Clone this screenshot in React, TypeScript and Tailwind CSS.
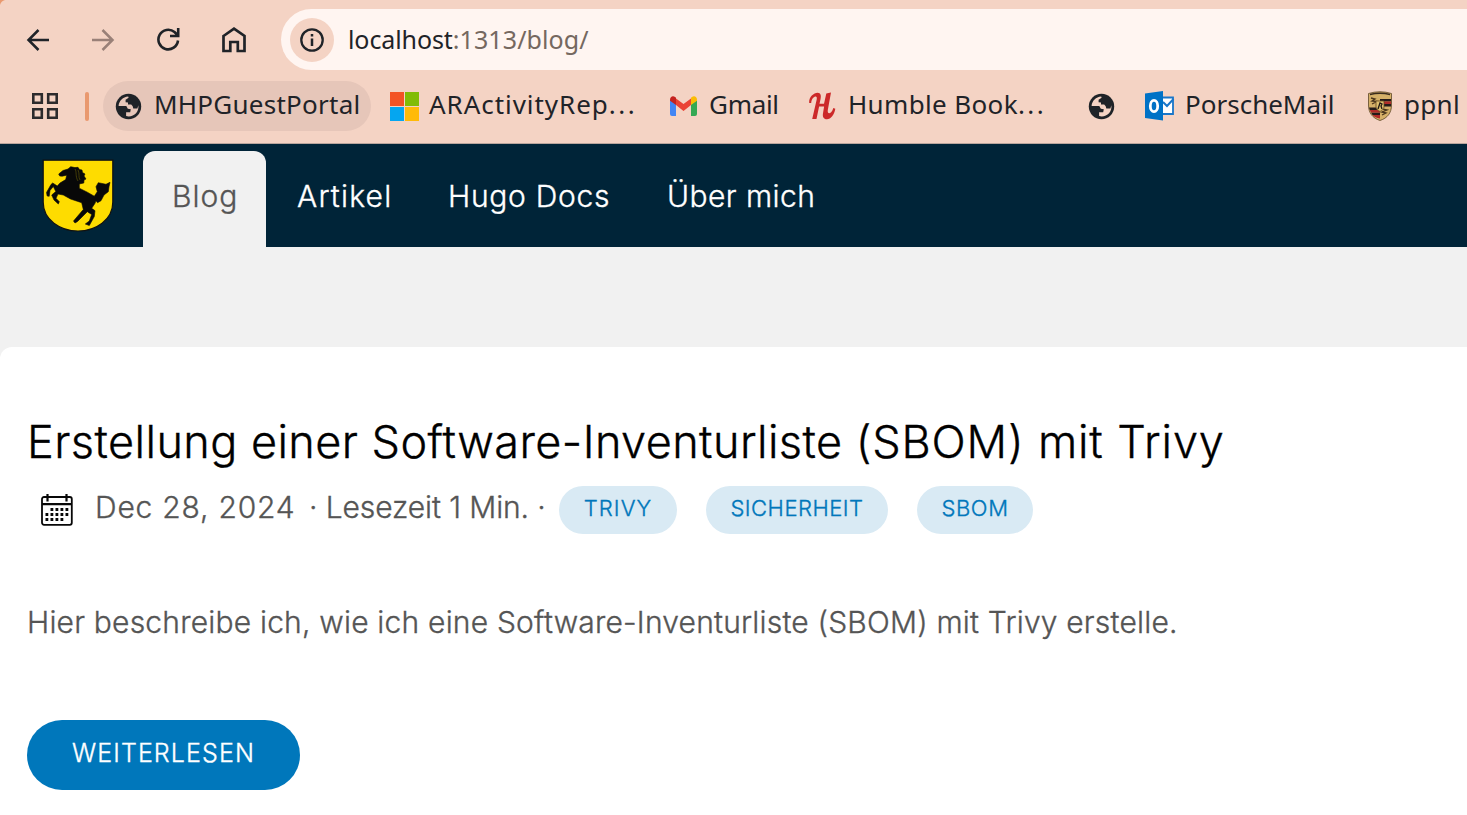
import React from 'react';

const ui = "font-['Noto_Sans','Open_Sans',sans-serif] whitespace-nowrap text-[#1f2328]";
const bookmark = "shrink-0 pb-[3px] text-[26px] leading-[47px]";
const body = "font-['Inter','Liberation_Sans',sans-serif] whitespace-nowrap";
const tag = "rounded-full bg-[#d9eaf4] pb-1 text-center text-[22px] leading-[44px] text-[#0077bb]";

function Globe({ className = '' }: { className?: string }) {
  return (
    <svg className={`shrink-0 ${className}`} width="27" height="27" viewBox="0 0 27 27">
      <circle cx="13.5" cy="13.5" r="12.7" fill="#1f2328" />
      <path className="fill-[var(--hole)]" d="M3.6 12.9C3.9 8 8 3.8 13.2 3.5L13.6 4.7 10.6 6.8V9.3L13 9.4V11.6H16.2L17.7 13.2 18.3 15.6H22.4L23.3 12.2C24.4 18.2 19.4 23.6 13.6 23.5L11.1 23.1V19.3H15.2L15.8 16.2 12.8 15.7 11.3 13Z" />
    </svg>
  );
}

function Bookmarks() {
  return (
    <div className="flex h-[50px] items-center">
      <svg className="ml-8 shrink-0" width="27" height="27" fill="none" stroke="#2c2b2d" strokeWidth="2.6">
        <path d="M1.3 1.3h8.5v8.5H1.3zM16.2 1.3h8.5v8.5h-8.5zM1.3 16.2h8.5v8.5H1.3zM16.2 16.2h8.5v8.5h-8.5z" />
      </svg>
      <div className="ml-[26px] h-[29px] w-1 shrink-0 rounded-sm bg-[#e9996f]" />
      <div className="ml-[14px] flex h-[50px] w-[268px] shrink-0 items-center rounded-full bg-[#e6c6b9] [--hole:#e6c6b9]">
        <Globe className="ml-3" />
        <span className={`${ui} ${bookmark} ml-[12px] tracking-[0.25px]`}>MHPGuestPortal</span>
      </div>
      <svg className="ml-[19px] shrink-0" width="29" height="29">
        <path d="M0 0h14v14H0z" fill="#f35325" />
        <path d="M15 0h14v14H15z" fill="#81bc06" />
        <path d="M0 15h14v14H0z" fill="#05a6f0" />
        <path d="M15 15h14v14H15z" fill="#ffba08" />
      </svg>
      <span className={`${ui} ${bookmark} ml-[10px] w-[230px] tracking-[0.95px]`}>ARActivityRep<span className="tracking-[2.5px]">...</span></span>
      <svg className="ml-[11px] shrink-0" width="27" height="20" viewBox="0 0 27 20">
        <path d="M0 4l6 4v12H2a2 2 0 0 1-2-2z" fill="#4285f4" />
        <path d="M21 8l6-4v14a2 2 0 0 1-2 2h-4z" fill="#34a853" />
        <path d="M6 2.5l7.5 5.4L21 2.5V9l-7.5 6L6 9z" fill="#ea4335" />
        <path d="M0 3.5C0 .6 3-.8 5.1 1L6 1.8V9L0 4.8z" fill="#c5221f" />
        <path d="M27 3.5C27 .6 24-.8 21.9 1l-.9.8V9l6-4.2z" fill="#fbbc04" />
      </svg>
      <span className={`${ui} ${bookmark} ml-[12px] w-[88px] tracking-[-0.3px]`}>Gmail</span>
      <svg className="ml-[11px] mr-px shrink-0" width="28" height="28" viewBox="0 0 28 28" fill="#cc2929">
        <path d="M1.2 11C.6 5 6 .8 9.5.8c3.5 0 3.8 3 3 6.5l-1 4.500h4.500L18.300 1.500 23 .5 19.800 18c-.5 3.500 1.500 4 3.300 2.200 1.200-1.200 1.800-2.700 2.200-4.200l2 .7c-1 6-4.500 10.500-8.300 10.500-3.500 0-4.600-2.500-4-6l1.100-6.700h-5L8.500 27H4.200L8.700 7.500C9.300 4.500 8 4 6.300 5 4.200 6.200 3.300 8.500 3.200 11z" />
      </svg>
      <span className={`${ui} ${bookmark} ml-[11px] w-[210px] tracking-[0.35px]`}>Humble Book<span className="tracking-[2.5px]">...</span></span>
      <Globe className="ml-[30px] [--hole:#f4d3c4]" />
      <svg className="ml-[30px] shrink-0" width="30" height="30" viewBox="0 0 30 30">
        <path d="M17 6.500h11V23H17z" fill="#fff" stroke="#1976c9" strokeWidth="1.800" />
        <path d="M18 11l4 4 6.500-7" fill="none" stroke="#1976c9" strokeWidth="2" />
        <path d="M0 2.500L18 0v29.500L0 27z" fill="#0072c6" />
        <ellipse cx="9" cy="15" rx="3.700" ry="5.700" fill="none" stroke="#fff" strokeWidth="2.800" />
      </svg>
      <span className={`${ui} ${bookmark} ml-[10px] w-[152px]`}>PorscheMail</span>
      <svg className="ml-[31px] shrink-0" width="24" height="30" viewBox="0 0 24 30">
        <path d="M.5 2.500Q12-1 23.500 2.500V14c0 8-4 13-11.500 15.500C4.500 27 .5 22 .5 14z" fill="#d5b068" stroke="#5d4827" strokeWidth=".8" />
        <path d="M2 2.800q10-2.500 20 0v1.400q-10-2.500-20 0z" fill="#3a2b1c" />
        <path d="M12 8h11v2.500H12zM12 13h11v2.500H12zM1 16.500h10V19H1.800zM3 21.500h9V24H4.500z" fill="#241b1a" />
        <path d="M12 10.500h11V13H12zM1.800 19H12v2.500H3zM4.500 24H12v3.500C8.500 27 6 26 4.500 24z" fill="#b12b28" />
        <path d="M3 7l4 1-3 2 5 .5-5 2.500M14 18l5 1-5 2 4 1-4 2" fill="none" stroke="#4a351c" strokeWidth="1.300" />
        <path d="M8 10h8v6c0 2-2 3.500-4 4.500-2-1-4-2.500-4-4.500z" fill="#dfbf70" stroke="#61471f" strokeWidth=".8" />
        <path d="M10 18l2-6 2 1-1 2 1 3" fill="none" stroke="#211811" strokeWidth="1.300" />
      </svg>
      <span className={`${ui} ${bookmark} ml-[12px] tracking-[0.3px]`}>ppnl</span>
    </div>
  );
}

function BrowserBar() {
  return (
    <header className="relative h-36 shrink-0 border-b border-[#b9a59d] bg-[#f4d3c4] pt-[9px]">
      <svg className="absolute left-0 top-0" width="5" height="5"><path d="M0 0h5Q1 1 0 5z" fill="#e9996f" /></svg>
      <div className="flex h-[61px] items-center">
        <svg className="ml-[26px] shrink-0" width="24" height="24" fill="none" stroke="#1f2328" strokeWidth="2.500">
          <path d="M23 12H3M12.500 2L2.500 12l10 10" />
        </svg>
        <svg className="ml-[41px] shrink-0" width="24" height="24" fill="none" stroke="#998078" strokeWidth="2.500">
          <path d="M1 12h20M11.500 2l10 10-10 10" />
        </svg>
        <svg className="ml-[41px] shrink-0" width="25" height="25" fill="none" stroke="#1f2328" strokeWidth="2.600">
          <path d="M22 13.500A9.800 9.800 0 1 1 18.500 5l3 3M22.200 1v8H14" />
        </svg>
        <svg className="ml-[41px] shrink-0" width="24" height="26" fill="none" stroke="#1f2328" strokeWidth="2.700">
          <path d="M1.500 9L12 1.700 22.500 9v15H15.800v-9H8.300v9H1.500z" />
        </svg>
        <div className="ml-[35px] flex h-[61px] flex-1 items-center rounded-l-full bg-[#fff5f1]">
          <div className="ml-[9px] flex h-11 w-11 items-center justify-center rounded-full bg-[#f4d3c4]">
            <svg width="24" height="24" fill="none" stroke="#1f2328" strokeWidth="2.300">
              <circle cx="12" cy="12" r="10.700" />
              <path d="M12 10.500v7.500M12 6v2.600" strokeWidth="2.500" />
            </svg>
          </div>
          <span className={`${ui} ml-[14px] text-[25px] leading-[61px] tracking-[-0.1px]`}>
            localhost<span className="tracking-[0.1px] text-[#75685f]">:1313/blog/</span>
          </span>
        </div>
      </div>
      <div className="pt-[11px]"><Bookmarks /></div>
    </header>
  );
}

function Crest() {
  return (
    <svg className="ml-[42px] mt-[15px] shrink-0" width="72" height="73" viewBox="0 0 72 73">
      <path d="M1.200 1.200h69.600V43c0 18-17 29-34.800 29S1.200 61 1.200 43z" fill="#fedc00" stroke="#111" strokeWidth="1.200" />
      <path d="M28.700 7.700L26 10l-5 1.500-4.300 3.500 1 2 2.500.2 4.500-1-1 4.400-5.700 3.400-2.700 3-4.600-3-1.700 1.500-4.500 8 .7 3.500 2 .3L8 31.500l3.300-4 2.500 5-4.100 3.500 2.300 5 4.300 4 1-2.300-3.300-3.400 2-4.300L21.300 36l7.200 4 11.200 3.700 1.600 6.800-9.800 11.500 1.500 2 2.500-1.500 9.800-9.800 4.400 2.800-2.400 6.500-4 3 4 1.500 5-9 .7-5.800-3.300-2.400 3.300-5 1-2.600 1.500 2 3.500-2L62 36l4.300-3.300.7-5 1-4.400-4 2-7.700-1.600-2.300 4 1.300 5-3 4.500-7-4-8-4V25l4.500-1 .2-3 2-1-2-3 1-2-2.500-1.500-.5-2.500-2.500-.5-1.500-2.200-3 .3z" fill="#080808" stroke="#080808" strokeWidth=".6" />
      <path d="M33 10c2 3 0 7 3 12M36 11c2 4 0 7 2 10" stroke="#5c5207" strokeWidth=".7" fill="none" />
    </svg>
  );
}

function Calendar() {
  return (
    <svg className="ml-[13px] mr-px shrink-0" width="33" height="34" viewBox="0 0 33 34">
      <rect x="2" y="4" width="29.800" height="27.800" rx="2" fill="none" stroke="#080808" strokeWidth="1.800" />
      <path d="M2 11.200h29.500M7.500 1v7.500M26.500 1v7.500" stroke="#080808" strokeWidth="2.200" />
      <path d="M10.500 16.500h19M5.500 21.500h24M5.500 26.500h18.500" fill="none" stroke="#080808" strokeWidth="2.800" strokeDasharray="2.800 2.200" />
    </svg>
  );
}

export default function App() {
  return (
    <div className="flex h-[815px] w-[1467px] flex-col overflow-hidden bg-[#f1f1f1]">
      <BrowserBar />
      <nav className={`${body} flex h-[103px] shrink-0 bg-[#002438] text-[30px] font-light leading-[90px] text-white [-webkit-text-stroke:0.35px]`}>
        <Crest />
        <a className="ml-[29px] mt-[7px] h-24 w-[123px] rounded-t-xl bg-[#f1f1f1] pl-[29px] tracking-[1px] text-[#555]">Blog</a>
        <a className="ml-[31px] mt-[7px] w-[122px] tracking-[1.2px]">Artikel</a>
        <a className="ml-[29px] mt-[7px] w-[190px] tracking-[0.7px]">Hugo Docs</a>
        <a className="ml-[29px] mt-[7px] tracking-[0.45px]">Über mich</a>
      </nav>
      <main className={`${body} mt-[100px] flex flex-1 flex-col items-start rounded-tl-xl bg-white pl-[27px] font-light text-[#555] [-webkit-text-stroke:0.35px]`}>
        <h1 className="mt-[65px] h-[60px] text-[45px] font-light leading-[60px] tracking-[0.44px] text-black">
          Erstellung einer Software-Inventurliste <span className="tracking-[0.85px]">(SBOM) mit Trivy</span>
        </h1>
        <div className="mt-[14px] flex h-12 items-center text-[30px]">
          <Calendar />
          <span className="ml-[21px] w-[214px] pb-1.5 tracking-[0.8px]">Dec 28, 2024</span>
          <span className="w-[250px] pb-1.5 tracking-[-0.1px]">· Lesezeit 1 Min. ·</span>
          <span className={`${tag} w-[118px] tracking-[1.1px]`}>TRIVY</span>
          <span className={`${tag} ml-[29px] w-[182px] tracking-[0.5px]`}>SICHERHEIT</span>
          <span className={`${tag} ml-[29px] w-[116px] tracking-[0.6px]`}>SBOM</span>
        </div>
        <p className="mt-[63px] text-[30px] leading-[50px] tracking-[0.2px]">Hier beschreibe ich, wie ich eine Software-Inventurliste (SBOM) mit Trivy erstelle.</p>
        <button className="mt-[73px] h-[70px] w-[273px] rounded-full bg-[#0077bb] pb-[3px] text-[25px] tracking-[1.1px] text-white">WEITERLESEN</button>
      </main>
    </div>
  );
}
